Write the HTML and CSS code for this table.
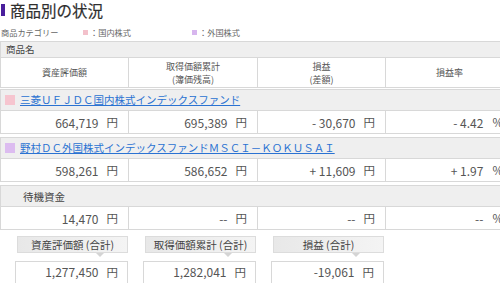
FILE: index.html
```html
<!DOCTYPE html>
<html lang="ja">
<head>
<meta charset="utf-8">
<link rel="stylesheet" href="styles.css">
</head>
<body>
<div class="page">
  <h1 class="title"><span class="title-bar"></span>商品別の状況</h1>
  <div class="legend">
    <span class="legend-head">商品カテゴリー</span>
    <span class="legend-item"><span class="chip chip-dom"></span>：国内株式</span>
    <span class="legend-item"><span class="chip chip-for"></span>：外国株式</span>
  </div>

  <div class="table">
    <div class="name-head">商品名</div>
    <div class="row head">
      <div class="cell">資産評価額</div>
      <div class="cell">取得価額累計<br>(簿価残高)</div>
      <div class="cell">損益<br>(差額)</div>
      <div class="cell">損益率</div>
    </div>

    <div class="block">
      <div class="fund"><span class="swatch swatch-dom"></span><a class="fund-link" href="#">三菱ＵＦＪＤＣ国内株式インデックスファンド</a></div>
      <div class="row data">
        <div class="cell">664,719<span class="unit">円</span></div>
        <div class="cell">695,389<span class="unit">円</span></div>
        <div class="cell">- 30,670<span class="unit">円</span></div>
        <div class="cell">- 4.42<span class="unit pct">%</span></div>
      </div>
    </div>

    <div class="block">
      <div class="fund"><span class="swatch swatch-for"></span><a class="fund-link" href="#">野村ＤＣ外国株式インデックスファンドＭＳＣＩ－ＫＯＫＵＳＡＩ</a></div>
      <div class="row data">
        <div class="cell">598,261<span class="unit">円</span></div>
        <div class="cell">586,652<span class="unit">円</span></div>
        <div class="cell">+ 11,609<span class="unit">円</span></div>
        <div class="cell">+ 1.97<span class="unit pct">%</span></div>
      </div>
    </div>

    <div class="block">
      <div class="fund fund-plain">待機資金</div>
      <div class="row data">
        <div class="cell">14,470<span class="unit">円</span></div>
        <div class="cell">--<span class="unit">円</span></div>
        <div class="cell">--<span class="unit">円</span></div>
        <div class="cell">--<span class="unit pct">%</span></div>
      </div>
    </div>
  </div>

  <div class="summary">
    <div class="sum-item">
      <div class="sum-label">資産評価額 (合計)</div>
      <div class="sum-value">1,277,450<span class="unit">円</span></div>
    </div>
    <div class="sum-item">
      <div class="sum-label">取得価額累計 (合計)</div>
      <div class="sum-value">1,282,041<span class="unit">円</span></div>
    </div>
    <div class="sum-item">
      <div class="sum-label">損益 (合計)</div>
      <div class="sum-value">-19,061<span class="unit">円</span></div>
    </div>
  </div>
</div>
</body>
</html>
```

FILE: styles.css
```css
html, body {
  margin: 0;
  padding: 0;
  background: #fff;
}
body {
  width: 500px;
  height: 283px;
  overflow: hidden;
  font-family: "Noto Sans CJK JP", "Noto Sans", sans-serif;
  color: #444;
}
.page {
  width: 520px;
}

.title {
  margin: 0;
  height: 20px;
  display: flex;
  align-items: center;
  font-size: 15.5px;
  font-weight: normal;
  color: #2e2e2e;
  line-height: 20px;
  -webkit-text-stroke: 0.2px #2e2e2e;
}
.title-bar {
  display: block;
  width: 4px;
  height: 12px;
  margin: 0 5px 0 1px;
  background: #4a1f9c;
}

.legend {
  display: flex;
  align-items: center;
  height: 12px;
  margin-top: 6px;
  font-size: 8.2px;
  line-height: 12px;
  color: #666;
}
.legend-head {
  width: 83px;
  padding-left: 1px;
  box-sizing: border-box;
}
.legend-item {
  display: flex;
  align-items: center;
  width: 109px;
}
.chip {
  display: block;
  width: 5px;
  height: 5px;
  margin-right: 2px;
}
.chip-dom { background: #f3c1cb; }
.chip-for { background: #d7b6ee; }

.table {
  margin-top: 3px;
  width: 513px;
}
.name-head {
  height: 17px;
  box-sizing: border-box;
  border: 1px solid #d8d8d8;
  background: #efefef;
  font-size: 9.5px;
  line-height: 15px;
  padding-left: 5px;
  color: #444;
}
.row {
  display: grid;
  grid-template-columns: 128px 129px 128px 128px;
  border-left: 1px solid #d8d8d8;
  border-bottom: 1px solid #d8d8d8;
}
.cell {
  border-right: 1px solid #d8d8d8;
  display: flex;
  align-items: center;
}
.head {
  height: 30px;
  box-sizing: border-box;
  margin-bottom: 1px;
}
.head .cell {
  justify-content: center;
  text-align: center;
  font-size: 9px;
  line-height: 13px;
  color: #555;
}

.block {
  margin-bottom: 3px;
}
.fund {
  height: 22px;
  box-sizing: border-box;
  border: 1px solid #d8d8d8;
  background: #efefef;
  display: flex;
  align-items: center;
  padding-left: 4px;
}
.swatch {
  display: block;
  width: 10px;
  height: 10px;
  margin-right: 5px;
}
.swatch-dom { background: #f6c5cf; }
.swatch-for { background: #dcbcf0; }
.fund-link {
  font-size: 10.5px;
  color: #2a72d2;
  text-decoration: underline;
  line-height: 14px;
  white-space: nowrap;
}
.fund-plain {
  padding-left: 22px;
  font-size: 10.5px;
  color: #444;
}

.data {
  height: 23px;
  box-sizing: border-box;
}
.data .cell {
  justify-content: flex-end;
  padding-right: 10px;
  font-size: 12px;
  color: #555;
}
.unit {
  margin-left: 8px;
  font-size: 11.5px;
}
.pct {
  margin-left: 9px;
}
.data .cell:last-child {
  padding-right: 10px;
}

.summary {
  display: grid;
  grid-template-columns: 128px 128px 128px;
  margin-top: 6px;
}
.sum-item {
  padding-left: 15px;
}
.sum-label {
  position: relative;
  margin-left: 2px;
  height: 17px;
  box-sizing: border-box;
  border: 1px solid #dcdcdc;
  background: linear-gradient(to right, #e8e8e8, #f4f4f4);
  font-size: 10.5px;
  line-height: 15px;
  text-align: center;
  color: #444;
}
.sum-label::after {
  content: "";
  position: absolute;
  left: 78px;
  top: 16px;
  border-left: 4px solid transparent;
  border-right: 4px solid transparent;
  border-top: 4px solid #d4d4d4;
}
.sum-value {
  margin-top: 8px;
  height: 26px;
  box-sizing: border-box;
  border: 1px solid #d8d8d8;
  display: flex;
  justify-content: flex-end;
  align-items: flex-start;
  padding: 2px 9px 0 0;
  font-size: 12px;
  line-height: 16px;
  color: #555;
}
```
